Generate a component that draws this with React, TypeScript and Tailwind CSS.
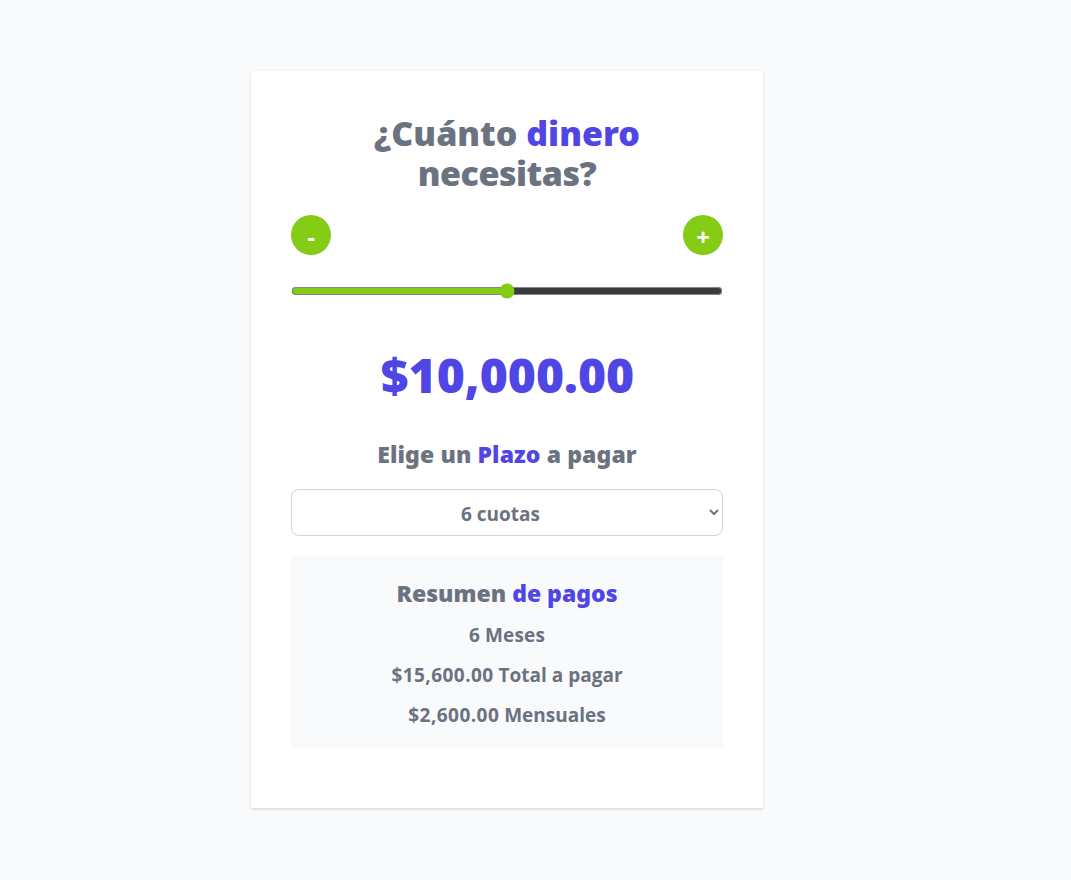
import { useState } from "react";

const money = (n: number) =>
  n.toLocaleString("en-US", { style: "currency", currency: "USD" });

const factors: Record<number, number> = { 6: 1.56, 12: 1.6, 24: 1.8 };

export default function App() {
  const [amount, setAmount] = useState(10000);
  const [months, setMonths] = useState(6);
  const total = amount * factors[months];
  const step = (d: number) =>
    setAmount((a) => Math.min(20000, Math.max(0, a + d)));
  const round =
    "flex h-10 w-10 items-center justify-center rounded-full bg-[#84cc16] pt-[3px] text-2xl font-bold text-white";

  return (
    <div className="flex min-h-screen justify-center bg-[#f9fafb] pr-[57px] pt-[71px] font-['Open_Sans','Noto_Sans',sans-serif] text-[#6b7280]">
      <main className="h-[737px] w-[512px] bg-white px-10 pb-10 pt-[42px] shadow-[0_1px_3px_0_rgba(0,0,0,0.1),0_1px_2px_0_rgba(0,0,0,0.06)]">
        <h1 className="text-center font-['Noto_Sans',sans-serif] text-[34px] font-black leading-10 tracking-[-0.5px]">
          <span className="block tracking-normal">
            ¿Cuánto <span className="text-[#4f46e5]">dinero</span>
          </span>
          <span className="block">necesitas?</span>
        </h1>
        <div className="mt-[22px] flex justify-between">
          <button type="button" className={round} onClick={() => step(-100)}>
            -
          </button>
          <button type="button" className={round} onClick={() => step(100)}>
            +
          </button>
        </div>
        <input
          type="range"
          min={0}
          max={20000}
          step={100}
          value={amount}
          onChange={(e) => setAmount(+e.target.value)}
          className="mt-6 block h-6 w-full accent-[#84cc16]"
        />
        <p className="mt-12 pl-px text-center font-['Noto_Sans',sans-serif] text-[48px] font-black leading-[48px] text-[#4f46e5]">
          {money(amount)}
        </p>
        <h2 className="mt-[39px] text-center font-['Noto_Sans',sans-serif] text-[23px] font-black leading-8 tracking-[0.1px]">
          Elige un <span className="text-[#4f46e5]">Plazo</span> a pagar
        </h2>
        <select
          value={months}
          onChange={(e) => setMonths(+e.target.value)}
          className="mt-[19px] block h-[47px] w-full rounded-lg border border-[#d1d5db] bg-white pb-[7px] pl-2 pr-[9px] pt-[9px] text-center text-[19px] font-bold text-[#6b7280]"
        >
          <option value={6}>6 cuotas</option>
          <option value={12}>12 cuotas</option>
          <option value={24}>24 cuotas</option>
        </select>
        <section className="mt-5 h-48 bg-[#f9fafb] pt-[21px] text-center text-[19px] font-bold leading-7">
          <h2 className="font-['Noto_Sans',sans-serif] text-[23px] font-black leading-8">
            Resumen <span className="text-[#4f46e5]">de pagos</span>
          </h2>
          <p className="mt-3 tracking-[0.15px]">{months} Meses</p>
          <p className="mt-3">
            <span className="tracking-[0.45px]">{money(total)}</span> Total a pagar
          </p>
          <p className="mt-3">
            <span className="tracking-[0.45px]">{money(total / months)}</span>{" "}
            Mensuales
          </p>
        </section>
      </main>
    </div>
  );
}
